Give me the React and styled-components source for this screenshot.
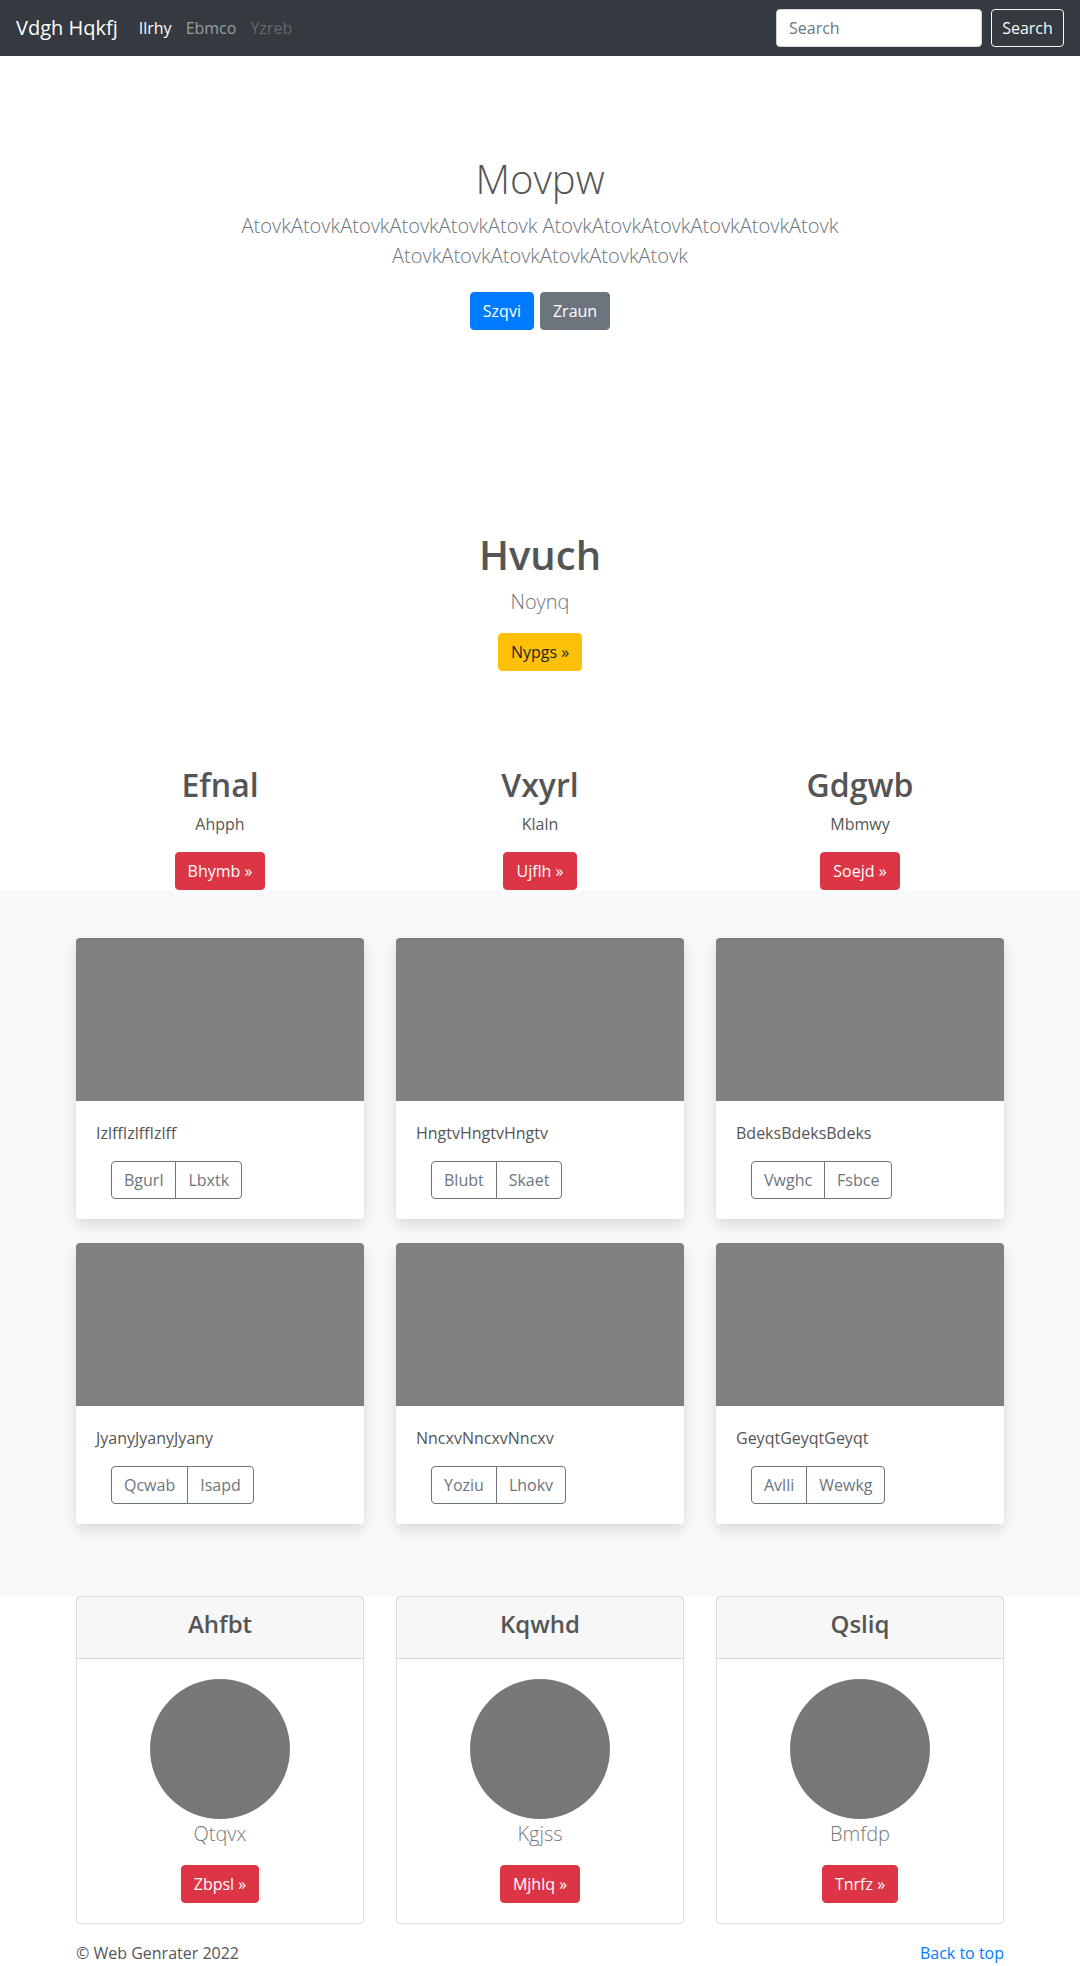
import React from 'react'
import styled, { createGlobalStyle, css } from 'styled-components'

const GlobalStyle = createGlobalStyle`
  * { box-sizing: border-box; }
  body {
    margin: 0;
    font-family: "Open Sans", "Noto Sans", sans-serif;
    font-size: 16px;
    line-height: 1.5;
    color: #555;
    background: #fff;
  }
`;

const variants = {
  primary: css`background: #007bff; border-color: #007bff; color: #fff;`,
  secondary: css`background: #6c757d; border-color: #6c757d; color: #fff;`,
  warning: css`background: #ffc107; border-color: #ffc107; color: #212529;`,
  danger: css`background: #dc3545; border-color: #dc3545; color: #fff;`,
  outline: css`background: transparent; border-color: #6c757d; color: #6c757d;`,
  light: css`background: transparent; border-color: #f8f9fa; color: #f8f9fa;`,
};

const Btn = styled.a`
  display: inline-block;
  padding: 6px 12px;
  font-family: inherit;
  font-size: 16px;
  line-height: 24px;
  border: 1px solid transparent;
  border-radius: 4px;
  text-decoration: none;
  cursor: pointer;
  ${(p) => variants[p.$variant || 'primary']}
`;

const Navbar = styled.nav`
  display: flex;
  align-items: center;
  height: 56px;
  padding: 8px 16px;
  background: #343a40;
`;

const Brand = styled.a`
  font-size: 20px;
  line-height: 30px;
  color: #fff;
  margin-right: 14px;
  text-decoration: none;
`;

const NavLink = styled.a`
  padding: 8px 7px;
  color: ${(p) => (p.$active ? '#fff' : p.$disabled ? 'rgba(255,255,255,.25)' : 'rgba(255,255,255,.5)')};
  text-decoration: none;
`;

const SearchForm = styled.form`
  margin-left: auto;
  display: flex;
  align-items: center;
  gap: 9px;
`;

const SearchInput = styled.input`
  width: 206px;
  height: 38px;
  padding: 6px 12px;
  font-family: inherit;
  font-size: 16px;
  border: 1px solid #ced4da;
  border-radius: 4px;
  &::placeholder { color: #6c757d; }
`;

const SearchButton = styled(Btn)`
  width: 73px;
  padding: 6px 0;
  text-align: center;
`;

const Hero = styled.section`
  text-align: center;
  padding-top: 99px;
`;

const HeroTitle = styled.h1`
  margin: 0 0 8px;
  font-size: 40px;
  line-height: 48px;
  font-weight: ${(p) => (p.$bold ? 600 : 300)};
  color: #555;
`;

const Lead = styled.p`
  margin: 0 auto 16px;
  max-width: 610px;
  font-size: 20px;
  line-height: 30px;
  font-weight: 300;
  color: ${(p) => p.$color || '#6c757d'};
`;

const ButtonRow = styled.div`
  display: flex;
  justify-content: center;
  gap: 6px;
  padding-top: 5px;
`;

const Promo = styled.section`
  text-align: center;
  padding-top: 201px;
`;

const Container = styled.div`
  width: 928px;
  margin: 0 auto;
`;

const Grid = styled.div`
  display: grid;
  grid-template-columns: repeat(3, 1fr);
  column-gap: 32px;
  row-gap: ${(p) => p.$rowGap || 0}px;
`;

const Features = styled(Grid)`
  margin-top: 95px;
  text-align: center;
`;

const Feature = styled.div`
  h2 {
    margin: 0 0 8px;
    font-size: 32px;
    line-height: 38px;
    font-weight: 600;
    color: #555;
  }
  p { margin: 0 0 16px; }
`;

const Album = styled.section`
  background: #f8f9fa;
  padding: 48px 0 72px;
`;

const Card = styled.div`
  background: #fff;
  border-radius: 4px;
  overflow: hidden;
  box-shadow: 0 6px 14px rgba(0, 0, 0, 0.13);
`;

const Thumb = styled.div`
  height: 163px;
  background: #808080;
`;

const CardBody = styled.div`
  padding: 20px;
  text-align: ${(p) => p.$align || 'left'};
  p { margin: 0 0 16px; }
`;

const BtnGroup = styled.div`
  display: inline-flex;
  margin-left: 15px;
  ${Btn} + ${Btn} {
    margin-left: -1px;
    border-top-left-radius: 0;
    border-bottom-left-radius: 0;
  }
  ${Btn}:first-child {
    border-top-right-radius: 0;
    border-bottom-right-radius: 0;
  }
`;

const PriceCard = styled.div`
  border: 1px solid rgba(0, 0, 0, 0.125);
  border-radius: 4px;
  background: #fff;
`;

const CardHeader = styled.div`
  padding: 12px 20px;
  background: rgba(0, 0, 0, 0.03);
  border-bottom: 1px solid rgba(0, 0, 0, 0.125);
  text-align: center;
  h4 {
    margin: 0 0 8px;
    font-size: 24px;
    line-height: 29px;
    font-weight: 600;
    color: #555;
  }
`;

const Avatar = styled.div`
  width: 140px;
  height: 140px;
  margin: 0 auto;
  border-radius: 50%;
  background: #777;
`;

const Footer = styled.footer`
  padding-top: 17px;
`;

const FooterRow = styled.div`
  display: flex;
  justify-content: space-between;
  a { color: #007bff; text-decoration: none; }
`;

const features = [
  { title: 'Efnal', text: 'Ahpph', cta: 'Bhymb' },
  { title: 'Vxyrl', text: 'Klaln', cta: 'Ujflh' },
  { title: 'Gdgwb', text: 'Mbmwy', cta: 'Soejd' },
];

const albumItems = [
  { text: 'IzlffIzlffIzlff', a: 'Bgurl', b: 'Lbxtk' },
  { text: 'HngtvHngtvHngtv', a: 'Blubt', b: 'Skaet' },
  { text: 'BdeksBdeksBdeks', a: 'Vwghc', b: 'Fsbce' },
  { text: 'JyanyJyanyJyany', a: 'Qcwab', b: 'Isapd' },
  { text: 'NncxvNncxvNncxv', a: 'Yoziu', b: 'Lhokv' },
  { text: 'GeyqtGeyqtGeyqt', a: 'Avlli', b: 'Wewkg' },
];

const people = [
  { title: 'Ahfbt', name: 'Qtqvx', cta: 'Zbpsl' },
  { title: 'Kqwhd', name: 'Kgjss', cta: 'Mjhlq' },
  { title: 'Qsliq', name: 'Bmfdp', cta: 'Tnrfz' },
];

export default function App() {
  return (
    <>
      <GlobalStyle />
      <Navbar>
        <Brand href="#">Vdgh Hqkfj</Brand>
        <NavLink href="#" $active>Ilrhy</NavLink>
        <NavLink href="#">Ebmco</NavLink>
        <NavLink href="#" $disabled>Yzreb</NavLink>
        <SearchForm onSubmit={(e) => e.preventDefault()}>
          <SearchInput type="text" placeholder="Search" />
          <SearchButton as="button" type="submit" $variant="light">Search</SearchButton>
        </SearchForm>
      </Navbar>

      <Hero>
        <HeroTitle>Movpw</HeroTitle>
        <Lead>
          AtovkAtovkAtovkAtovkAtovkAtovk AtovkAtovkAtovkAtovkAtovkAtovk AtovkAtovkAtovkAtovkAtovkAtovk
        </Lead>
        <ButtonRow>
          <Btn href="#" $variant="primary">Szqvi</Btn>
          <Btn href="#" $variant="secondary">Zraun</Btn>
        </ButtonRow>
      </Hero>

      <Promo>
        <HeroTitle $bold>Hvuch</HeroTitle>
        <Lead>Noynq</Lead>
        <Btn href="#" $variant="warning">Nypgs &raquo;</Btn>
        <Container>
          <Features>
            {features.map((f) => (
              <Feature key={f.title}>
                <h2>{f.title}</h2>
                <p>{f.text}</p>
                <Btn href="#" $variant="danger">{f.cta} &raquo;</Btn>
              </Feature>
            ))}
          </Features>
        </Container>
      </Promo>

      <Album>
        <Container>
          <Grid $rowGap={24}>
            {albumItems.map((item) => (
              <Card key={item.text}>
                <Thumb />
                <CardBody>
                  <p>{item.text}</p>
                  <BtnGroup>
                    <Btn as="button" type="button" $variant="outline">{item.a}</Btn>
                    <Btn as="button" type="button" $variant="outline">{item.b}</Btn>
                  </BtnGroup>
                </CardBody>
              </Card>
            ))}
          </Grid>
        </Container>
      </Album>

      <Container>
        <Grid>
          {people.map((p) => (
            <PriceCard key={p.title}>
              <CardHeader>
                <h4>{p.title}</h4>
              </CardHeader>
              <CardBody $align="center">
                <Avatar />
                <Lead $color="#777">{p.name}</Lead>
                <Btn href="#" $variant="danger">{p.cta} &raquo;</Btn>
              </CardBody>
            </PriceCard>
          ))}
        </Grid>
        <Footer>
          <FooterRow>
            <span>&copy; Web Genrater 2022</span>
            <a href="#">Back to top</a>
          </FooterRow>
        </Footer>
      </Container>
    </>
  );
}
